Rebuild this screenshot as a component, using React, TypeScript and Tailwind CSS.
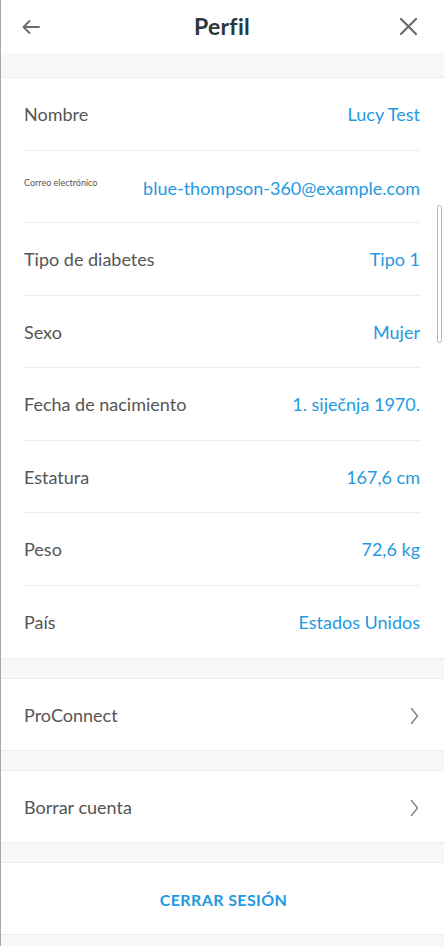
const FIELDS = [
  { label: 'Nombre', value: 'Lucy Test' },
  { label: 'Correo electrónico', value: 'blue-thompson-360@example.com', small: true },
  { label: 'Tipo de diabetes', value: 'Tipo 1' },
  { label: 'Sexo', value: 'Mujer' },
  { label: 'Fecha de nacimiento', value: '1. siječnja 1970.' },
  { label: 'Estatura', value: '167,6 cm' },
  { label: 'Peso', value: '72,6 kg' },
  { label: 'País', value: 'Estados Unidos' },
];

function Gap({ h }: { h: string }) {
  return <div className={`${h} bg-[#f7f7f7] border-y border-[#ededed]`} />;
}

function LinkRow({ label }: { label: string }) {
  return (
    <div className="h-[71px] bg-white flex items-center justify-between pl-[23px] pr-[25px] pt-[2px]">
      <span className="text-[18px] text-[#555]">{label}</span>
      <svg width="9" height="18" viewBox="0 0 9 18" fill="none" stroke="#858585" strokeWidth="1.5" strokeLinecap="round" strokeLinejoin="round">
        <path d="M1.5 1.5L7.5 9l-6 7.5" />
      </svg>
    </div>
  );
}

export default function App() {
  return (
    <div
      className="relative min-h-screen bg-[#f7f7f7] border-l border-[#a8a8a8] flex flex-col"
      style={{ fontFamily: 'Lato, "Open Sans", sans-serif' }}
    >
      {/* header */}
      <div className="h-[53px] bg-white flex items-center justify-between pl-5 pr-[26px]">
        <svg width="20" height="16" viewBox="0 0 20 16" fill="none" stroke="#6b6b6b" strokeWidth="1.8" strokeLinecap="round" strokeLinejoin="round">
          <path d="M18 8H2.5M8.5 2L2.5 8l6 6" />
        </svg>
        <h1 className="text-[23px] font-bold text-[#2c373d] tracking-[0.3px] ml-[4px]">Perfil</h1>
        <svg width="19" height="19" viewBox="0 0 19 19" fill="none" stroke="#6b6b6b" strokeWidth="2.2" strokeLinecap="round">
          <path d="M2 2l15 15M17 2L2 17" />
        </svg>
      </div>

      <div className="h-[25px] bg-[#f7f8f9] border-b border-[#ececec]" />

      {/* datos */}
      <div className="bg-white">
        {FIELDS.map((f, i) => (
          <div key={f.label} className="pl-[23px] pr-6">
            <div
              className={`h-[72.5px] flex justify-between ${f.small ? 'items-start pt-[24px]' : 'items-center pt-[2px]'} ${
                i < FIELDS.length - 1 ? 'border-b border-[#eeeeee]' : ''
              }`}
            >
              {f.small ? (
                <>
                  <span className="text-[9px] text-[#555] mt-[1px]">{f.label}</span>
                  <span className="text-[18px] text-[#1f9ae0] leading-none mt-[4px]">{f.value}</span>
                </>
              ) : (
                <>
                  <span className="text-[18px] text-[#555]">{f.label}</span>
                  <span className="text-[18px] text-[#1f9ae0]">{f.value}</span>
                </>
              )}
            </div>
          </div>
        ))}
      </div>

      <Gap h="h-[21px]" />
      <LinkRow label="ProConnect" />
      <Gap h="h-[21px]" />
      <LinkRow label="Borrar cuenta" />
      <Gap h="h-[21px]" />

      <div className="h-[72px] bg-white flex items-center justify-center pt-[2px] border-b border-[#ededed]">
        <span className="text-[16px] font-bold text-[#1f9ae0] tracking-[0.4px] ml-[2px]">CERRAR SESIÓN</span>
      </div>

      {/* scrollbar */}
      <div className="absolute right-[2px] top-[205px] w-[5px] h-[138px] rounded-full border border-[#b5b5b5] bg-white" />
    </div>
  );
}
